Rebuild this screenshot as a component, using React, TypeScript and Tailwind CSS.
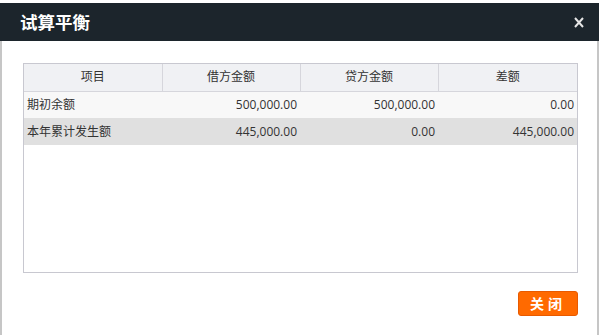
import React from "react";

const rows = [
  { name: "期初余额", debit: "500,000.00", credit: "500,000.00", diff: "0.00" },
  { name: "本年累计发生额", debit: "445,000.00", credit: "0.00", diff: "445,000.00" },
];

export default function App() {
  return (
    <div
      className="h-[335px] w-[600px] overflow-hidden bg-white pt-[3px]"
      style={{ fontFamily: '"Open Sans", "Noto Sans CJK SC", sans-serif' }}
    >
      <div className="flex h-[332px] w-[599px] flex-col">
        {/* title bar */}
        <div className="flex h-[38px] items-center justify-between bg-[#1c252c] pl-[20px] pr-[15px]">
          <h1 className="text-[17.5px] font-bold text-white">试算平衡</h1>
          <svg width="10" height="11" viewBox="0 0 10 11" className="mt-[1px]">
            <path d="M1 1 L9 10 M9 1 L1 10" stroke="#e6e6e6" strokeWidth="2" />
          </svg>
        </div>

        <div className="flex flex-1 flex-col border-x-2 border-[#c6c6c6] bg-white pl-[21px] pr-[19px] pt-[22px]">
          {/* grid */}
          <div className="h-[210px] border border-[#c8c8d0]">
            <table className="w-full border-collapse text-[12px] text-[#333]">
              <thead>
                <tr className="h-[27px] bg-[#f0f1f4]">
                  <th className="w-[138px] border-r border-b border-[#d6d6dc] font-normal">项目</th>
                  <th className="w-[138px] border-r border-b border-[#d6d6dc] font-normal">借方金额</th>
                  <th className="w-[138px] border-r border-b border-[#d6d6dc] font-normal">贷方金额</th>
                  <th className="border-b border-[#d6d6dc] font-normal">差额</th>
                </tr>
              </thead>
              <tbody>
                {rows.map((r, i) => (
                  <tr key={r.name} className={i % 2 ? "h-[27px] bg-[#e0e0e0]" : "h-[27px] bg-[#f8f8f8]"}>
                    <td className="pl-[3px]">{r.name}</td>
                    <td className="pr-[3px] text-right">{r.debit}</td>
                    <td className="pr-[3px] text-right">{r.credit}</td>
                    <td className="pr-[3px] text-right">{r.diff}</td>
                  </tr>
                ))}
              </tbody>
            </table>
          </div>

          <div className="flex justify-end pt-[18px]">
            <button className="h-[25px] w-[60px] rounded-[3px] border border-[#e85a00] bg-[#ff6a00] text-[14px] font-bold tracking-[4px] text-white">
              关闭
            </button>
          </div>
        </div>
      </div>
    </div>
  );
}
